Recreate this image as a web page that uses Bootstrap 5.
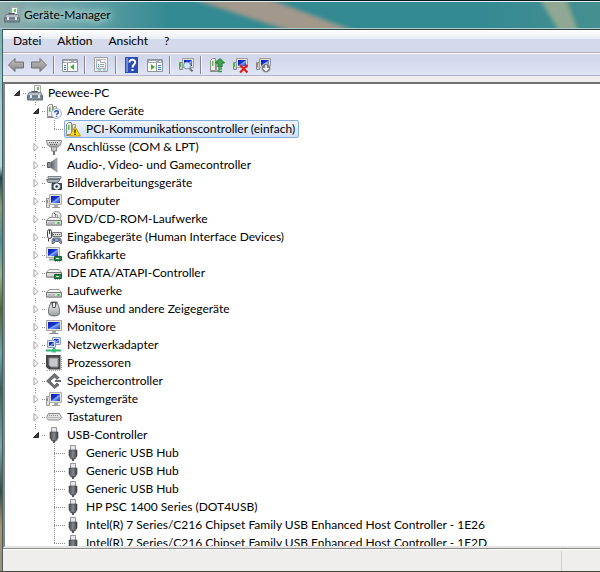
<!DOCTYPE html>
<html lang="de">
<head>
<meta charset="utf-8">
<meta name="viewport" content="width=device-width, initial-scale=1">
<title>Geräte-Manager</title>
<link href="https://cdn.jsdelivr.net/npm/bootstrap@5.3.0/dist/css/bootstrap.min.css" rel="stylesheet">
<style>
body{font-family:Lato,"Open Sans",sans-serif;font-size:12px;line-height:18px;color:#000;background:#338a92}
button{font:inherit;color:inherit;background:none;border:0;padding:0}
svg{display:block;flex:none}
.win{border-top:1px solid #0a1a1e;border-bottom:1px solid #454b3c;background:linear-gradient(#6aa0a2 0,#a8d4d4 20%,#b9d9d9 29%,#24434d 31%,#8f9a72 36%,#4c8f96 42%,#9db08a 48%,#5b6333 54%,#6fa6a6 62%,#3e5e5c 68%,#7aa6a4 78%,#3c4a48 86%,#b08e74 92%,#a58b78 100%) left/2px 100% no-repeat,#f0eded}
.titlebar{height:28px;border-top:1px solid #dfeeee;border-bottom:1px solid #a9cdcd;background:#338a92;position:relative;overflow:hidden}
.titlebar .aero{position:absolute;left:0;top:0}
.titlebar h1{font-size:12px;line-height:18px;font-weight:400;position:relative;text-shadow:0 0 6px #c8e6e6,0 0 9px #b8dada,0 0 12px #b8dada}
.titlebar .appicon{position:relative}
.client{border-left:1px solid #40605f;border-top:1px solid #3a4444;margin-left:2px;min-height:0}
.menubar{height:23px;padding-left:10px;background:linear-gradient(#fff 0,#eaeef6 9px,#d4d9ec 9px,#d4d9ec 100%);border-bottom:1px solid #b0aeb0;box-shadow:0 1px #fff}
.tools{height:22px;margin-top:1px;padding-left:1px;background:linear-gradient(#d3d8ec 30%,#e0e5f6);border-bottom:1px solid #b4b4cf}
.tool{margin:0 3px 0 4px}
.rule{width:1px;height:18px;margin:0 4px 0 3px;background:#85858b;box-shadow:1px 0 #f4f6fc}
.tree-pane{border:solid #77777b;border-width:2px 0 2px 2px;border-top-color:#717175;border-bottom-color:#e4e4e4;border-left-color:#85858a;margin-top:6px;background:#fff;overflow:hidden;min-height:0}
.tree,.tree ul{list-style:none;margin:0;padding:0}
.tree{padding-left:4px}
.tree ul{margin-left:19px}
.tree ul>li{background:repeating-linear-gradient(#8a8a8a 0 1px,transparent 1px 2px) 7px 0/1px 100% no-repeat}
.tree ul>li:last-child{background-size:1px 9px}
.node{display:flex;align-items:center;height:18px;white-space:nowrap}
.tog{width:14px;height:12px;flex:none;display:flex;align-items:center;justify-content:center;background:#fff}
.tog svg{margin-left:2px}
.dots{width:4px;height:1px;flex:none;background:repeating-linear-gradient(90deg,#8a8a8a 0 1px,transparent 1px 2px)}
.dots.leaf{width:11px;margin-left:7px}
.lbl{padding-left:5px}
.sel{height:18px;margin-left:-1px;padding-right:3px;border:1px solid #84acdd;border-radius:2px;background:linear-gradient(#f0f6fe,#cfe1fa)}
.status{height:23px;border-top:1px solid #8c8c89;background:#f0eded;box-shadow:inset 0 1px #fff}
.status .cell{width:39px;border-left:1px solid #cfcdcd;margin-top:2px}
</style>
<script src="https://cdn.jsdelivr.net/npm/bootstrap@5.3.0/dist/js/bootstrap.bundle.min.js"></script>
</head>
<body>
<svg width="0" height="0" class="position-absolute" aria-hidden="true">
<defs>
<linearGradient id="scr" x1="0" y1="0" x2="1" y2="1"><stop offset="0" stop-color="#0a1fa0"/><stop offset=".45" stop-color="#1634d8"/><stop offset=".55" stop-color="#7ea4ff"/><stop offset="1" stop-color="#1530c0"/></linearGradient>
<linearGradient id="metal" x1="0" y1="0" x2="0" y2="1"><stop offset="0" stop-color="#fafafa"/><stop offset="1" stop-color="#9a9da1"/></linearGradient>
<linearGradient id="spk" x1="0" y1="0" x2="1" y2="0"><stop offset="0" stop-color="#50555b"/><stop offset="1" stop-color="#b4b9be"/></linearGradient>
<linearGradient id="dark" x1="0" y1="0" x2="1" y2="0"><stop offset="0" stop-color="#47494d"/><stop offset=".5" stop-color="#85888d"/><stop offset="1" stop-color="#3c3e42"/></linearGradient>
<linearGradient id="arr" x1="0" y1="0" x2="0" y2="1"><stop offset="0" stop-color="#c4c4c4"/><stop offset="1" stop-color="#858585"/></linearGradient>
</defs>
<symbol id="i-pc" viewBox="0 0 16 16"><path d="M7.500 .5h6v8h-6z" fill="#f2f2f2" stroke="#aaa"/><path d="M10 2h2v3h-2z" fill="#6cc060"/><path d="M4.500 8V6.500h6V8" fill="none" stroke="#555"/><path d="M2 7.500h12l1.500 3.500H.5z" fill="#b4bec4" stroke="#74818a"/><path d="M.5 11h15v4H.5z" fill="#7d8d96" stroke="#5b6a73"/><path d="M3 10h2v3H3zM11 10h2v3h-2z" fill="#e4e8ea"/></symbol>
<symbol id="i-tower" viewBox="0 0 16 16"><path d="M1.500 3.500l2-2h3v12h-5z" fill="#ececec" stroke="#909090"/><path d="M3 4h1.500v5H3z" fill="#58c04a"/><path d="M7.500 3.500h3v10h-3z" fill="#e4e4e4" stroke="#999"/><path d="M1 14.500h9" stroke="#888"/></symbol>
<symbol id="i-q" viewBox="0 0 16 16"><use href="#i-tower" width="16" height="16"/><circle cx="10.500" cy="10.500" r="4.900" fill="#f3f6fd" stroke="#a2acc4"/><path d="M8.800 9.400c0-2.300 3.600-2.200 3.500 0 0 1.200-1.700 1.200-1.700 2.400M10.600 12.800v1" fill="none" stroke="#2445b0" stroke-width="1.400"/></symbol>
<symbol id="i-warn" viewBox="0 0 16 16"><use href="#i-tower" width="16" height="16"/><path d="M10 5.500l5.500 9.500h-11z" fill="#ffd91e" stroke="#c49a00" stroke-linejoin="round"/><path d="M10 8.500v3.300M10 12.600v1.400" stroke="#4a3a00" stroke-width="1.500"/></symbol>
<symbol id="i-port" viewBox="0 0 16 16"><path d="M.5 1.500h15l-1 4.500-3 2H4.500l-3-2z" fill="url(#metal)" stroke="#888"/><path d="M3 3.500h10M4 5.500h8" stroke="#555" stroke-dasharray="1 1"/><path d="M5.500 8h5v4h-5z" fill="#ccc" stroke="#888"/><path d="M8 12v4" stroke="#777" stroke-width="2"/></symbol>
<symbol id="i-audio" viewBox="0 0 16 16"><path d="M1.500 5.500h3v5h-3z" fill="#8b9096" stroke="#55595f"/><path d="M4.500 5.500L11 1v14L4.500 10.500z" fill="url(#spk)" stroke="#888d92" stroke-width=".7"/></symbol>
<symbol id="i-cam" viewBox="0 0 16 16"><path d="M2 1.500h13v2H2z" fill="#c7ccd1" stroke="#7c858c"/><path d="M.5 4.500H14l-2 3H2z" fill="#a9b1b8" stroke="#68727a"/><path d="M6 8.500h9.500v6H6z" fill="#59636b" stroke="#333c43"/><circle cx="10.700" cy="11.500" r="2.700" fill="#dbe9f5" stroke="#fff"/><circle cx="10.700" cy="11.500" r="1.200" fill="#234"/></symbol>
<symbol id="i-mon" viewBox="0 0 16 16"><path d="M.5 1.500h15v10H.5z" fill="#e8e6de" stroke="#a5a59c"/><path d="M2 3h12v7H2z" fill="url(#scr)"/><path d="M6 12h4v2H6z" fill="#aaa"/><path d="M3.500 14.500h9" stroke="#888"/></symbol>
<symbol id="i-comp" viewBox="0 0 16 16"><path d="M.5 5.500h3v9h-3z" fill="#ddd" stroke="#999"/><path d="M1.500 7v3" stroke="#4aba3d"/><path d="M3.500 1.500h12v10h-12z" fill="#e8e6de" stroke="#b0b0a8"/><path d="M5 3h9v7H5z" fill="url(#scr)"/><path d="M8 12h4v2H8z" fill="#aaa"/><path d="M6 14.500h8" stroke="#999"/></symbol>
<symbol id="i-drive" viewBox="0 0 16 16"><path d="M3 6.500h10l2.500 3v4.500H.5V9.500z" fill="#f6f6f6" stroke="#999"/><path d="M.5 9.500h15V14H.5z" fill="#d8dadc" stroke="#777"/><path d="M2 12h7" stroke="#999"/><path d="M11.500 11h2v2h-2z" fill="#2fbb2f"/></symbol>
<symbol id="i-dvd" viewBox="0 0 16 16"><circle cx="10.500" cy="5" r="4.500" fill="#ececec" stroke="#8e8e8e"/><circle cx="10.500" cy="5" r="1.300" fill="#fff" stroke="#888"/><path d="M8 2l2 2" stroke="#555"/><use href="#i-drive" width="16" height="16"/></symbol>
<symbol id="i-hid" viewBox="0 0 16 16"><rect x="1.500" y=".5" width="4" height="9" rx="2" fill="#eee" stroke="#444"/><path d="M3.500 1v4M2.500 9.500v3" stroke="#444"/><path d="M6.500 3.500h9v4h-9z" fill="#ddd" stroke="#777"/><path d="M7 5.500h8" stroke="#555" stroke-dasharray="1 1"/><path d="M6 14.500c0-5 1-6 2.500-5.500h4c2-.5 3 1 3 5.500-1.500.5-2-1.500-3-2h-3c-1 .5-1.500 3-3.500 2z" fill="#98a0aa" stroke="#59616b"/><path d="M8 10v2M7 11h2" stroke="#34b"/><circle cx="13" cy="11" r="1" fill="#36c"/></symbol>
<symbol id="i-gpu" viewBox="0 0 16 16"><path d="M.5 .5h13v10H.5z" fill="#e8e6de" stroke="#b0b0a8"/><path d="M2 2h10v7H2z" fill="url(#scr)"/><path d="M3 12.500h5" stroke="#999" stroke-width="2"/><path d="M8.500 9.500h7v4h-7z" fill="#2a8a4a" stroke="#145c2b"/><path d="M10 11h3v1h-3z" fill="#d9ead8"/><path d="M9 14.500h6" stroke="#c9a930" stroke-dasharray="1 1"/></symbol>
<symbol id="i-ide" viewBox="0 0 16 16"><path d="M3 4.500h10l2.500 3V12H.5V7.500z" fill="#f4f4f4" stroke="#999"/><path d="M.5 7.500h15V12H.5z" fill="#d8dadc" stroke="#777"/><path d="M8.500 9.500h7v4h-7z" fill="#2a8a4a" stroke="#145c2b"/><path d="M10 11h3v1h-3z" fill="#d9ead8"/><path d="M9 14.500h6" stroke="#c9a930" stroke-dasharray="1 1"/></symbol>
<symbol id="i-mouse" viewBox="0 0 16 16"><path d="M5 1c-1.500 4-3.500 8-2 12.500 3 2 7 2 10 0C14.500 9 12.500 5 11 1z" fill="url(#metal)" stroke="#6a6a6a"/><path d="M5 1l1.500 6h3L11 1z" fill="#505257"/><path d="M8 2v4" stroke="#eee" stroke-width="2"/></symbol>
<symbol id="i-net" viewBox="0 0 16 16"><path d="M6.500 .5h8v7h-8z" fill="#dfe6f5" stroke="#8b9bbe"/><path d="M8 2h5v4H8z" fill="url(#scr)"/><path d="M1.500 3.500h8v7h-8z" fill="#dfe6f5" stroke="#8b9bbe"/><path d="M3 5h5v4H3z" fill="url(#scr)"/><path d="M0 13.500h15M8 11v3" stroke="#2fb070" stroke-width="2"/><path d="M6 12h4v3.500H6z" fill="#35c07c"/></symbol>
<symbol id="i-cpu" viewBox="0 0 16 16"><path d="M1 15.500h14M15.500 2v13" stroke="#c79b3b" stroke-dasharray="1 1"/><path d="M0 0h14.500v14.500H3L0 12z" fill="#47474a"/><path d="M3 3h9v9H5L3 10z" fill="#c6c8cb" stroke="#8a8c90"/></symbol>
<symbol id="i-stor" viewBox="0 0 16 16"><path d="M8.500 .5l4.500 4-2 2-2.500-2.500L4 8l4.500 4.500L11 10l2 2-4.500 3.500L.5 8z" fill="#707276" stroke="#46484c" stroke-width=".7"/><path d="M9 7h6v2H9z" fill="#66686c"/></symbol>
<symbol id="i-kbd" viewBox="0 0 16 16"><path d="M2.500 4.500h11l2 4-2 2.500h-11L.5 8.500z" fill="#e4e4e6" stroke="#888"/><path d="M3 6.500h10M2.500 8.500h11" stroke="#888" stroke-dasharray="1 1"/></symbol>
<symbol id="i-usb" viewBox="0 0 16 16"><path d="M5.500 .5h5v5h-5z" fill="#e6e6ea" stroke="#95959b"/><path d="M4 5h8v6l-2 3H6l-2-3z" fill="url(#dark)" stroke="#3e4044" stroke-width=".6"/><path d="M8 13v3" stroke="#55575b" stroke-width="2"/></symbol>
<symbol id="t-open" viewBox="0 0 8 8"><path d="M6.500 1.500v5H1.500z" fill="#404040" stroke="#262626"/></symbol>
<symbol id="t-closed" viewBox="0 0 8 8"><path d="M2 .5L6 4.500 2 8z" fill="#fff" stroke="#a0a0a0"/></symbol>
</svg>

<div class="win d-flex flex-column vh-100">
<header class="titlebar d-flex align-items-center ps-1 flex-shrink-0">
<svg class="aero w-100 h-100" viewBox="0 0 600 26" preserveAspectRatio="none" aria-hidden="true">
<defs><filter id="soft" x="-20%" y="-50%" width="140%" height="200%"><feGaussianBlur stdDeviation="2"/></filter><linearGradient id="lft"><stop offset="0" stop-color="#8eabaa"/><stop offset=".5" stop-color="#62a0a4"/><stop offset="1" stop-color="#338a92"/></linearGradient><linearGradient id="rgt"><stop offset="0" stop-color="#338a92"/><stop offset="1" stop-color="#468f90"/></linearGradient></defs>
<rect width="170" height="26" fill="url(#lft)"/><rect x="480" width="120" height="26" fill="url(#rgt)"/>
<g filter="url(#soft)"><path d="M165-12h80l134 50h-62z" fill="#a3988c"/><path d="M538-6h27l15 40h-18z" fill="#90a893"/></g></svg>
<svg class="appicon" width="16" height="16" aria-hidden="true"><use href="#i-pc"/></svg>
<h1 class="mb-0 ps-1">Geräte-Manager</h1>
</header>
<div class="client d-flex flex-column flex-grow-1">
<nav class="menubar d-flex align-items-center flex-shrink-0 gap-3" aria-label="Menü">
<button type="button">Datei</button><button type="button">Aktion</button><button type="button">Ansicht</button><button type="button">?</button>
</nav>
<div class="tools d-flex align-items-center flex-shrink-0" id="tools" role="toolbar" aria-label="Symbolleiste"></div>
<main class="tree-pane flex-grow-1"><ul class="tree" id="tree"></ul></main>
<footer class="status d-flex justify-content-end flex-shrink-0"><div class="cell"></div></footer>
</div>
</div>
<script>
const svg=b=>`<svg width="16" height="16" viewBox="0 0 16 16" aria-hidden="true">${b}</svg>`;
const hub=['usb','Generic USB Hub'];
const data=['pc','Peewee-PC',[
['q','Andere Geräte',[['warn','PCI-Kommunikationscontroller (einfach)']]],
['port','Anschlüsse (COM & LPT)',0],['audio','Audio-, Video- und Gamecontroller',0],['cam','Bildverarbeitungsgeräte',0],['comp','Computer',0],['dvd','DVD/CD-ROM-Laufwerke',0],['hid','Eingabegeräte (Human Interface Devices)',0],['gpu','Grafikkarte',0],['ide','IDE ATA/ATAPI-Controller',0],['drive','Laufwerke',0],['mouse','Mäuse und andere Zeigegeräte',0],['mon','Monitore',0],['net','Netzwerkadapter',0],['cpu','Prozessoren',0],['stor','Speichercontroller',0],['comp','Systemgeräte',0],['kbd','Tastaturen',0],
['usb','USB-Controller',[hub,hub,hub,['usb','HP PSC 1400 Series (DOT4USB)'],['usb','Intel(R) 7 Series/C216 Chipset Family USB Enhanced Host Controller - 1E26'],['usb','Intel(R) 7 Series/C216 Chipset Family USB Enhanced Host Controller - 1E2D']]]]];
const esc=t=>t.replace('&','&amp;');
const node=([ic,t,c])=>{
 const tog=c===undefined?'<span class="dots leaf"></span>':`<button class="tog" type="button" aria-label="${esc(t)} ${c?'schließen':'öffnen'}"><svg width="8" height="8"><use href="#t-${c?'open':'closed'}"/></svg></button><span class="dots"></span>`;
 return `<li><div class="node">${tog}<div class="d-flex align-items-center${ic==='warn'?' sel':''}"><svg width="16" height="16" aria-hidden="true"><use href="#i-${ic}"/></svg><span class="lbl">${esc(t)}</span></div></div>${c?'<ul>'+c.map(node).join('')+'</ul>':''}</li>`};
document.getElementById('tree').innerHTML=node(data);
const pc='<path d="M1.500 5.500h3v7h-3z" fill="#ccc" stroke="#888"/><path d="M2.500 6v4" stroke="#3fbb35"/><path d="M4.500 1.500h11v9h-11z" fill="#e5e3dc" stroke="#9d9d9d"/><path d="M6 3h8v6H6z" fill="url(#scr)"/>';
const panel=a=>`<path d="M.5 2.500h15v12H.5z" fill="#fff" stroke="#8b929c"/><path d="M1 3h14v3H1z" fill="#a5abb4"/><path d="M2 4.500h9M12 4.500h2" stroke="#fff" stroke-dasharray="7 2"/>${a}`;
const T=[
['Zurück',svg('<path d="M.5 8L7 1.500V5h8.500v6H7v3.500z" fill="url(#arr)" stroke="#707070"/>')],
['Vorwärts',svg('<path d="M15.500 8L9 1.500V5H.5v6H9v3.500z" fill="url(#arr)" stroke="#707070"/>')],0,
['Konsolenstruktur',svg(panel('<path d="M5.500 6v8" stroke="#8b929c"/><path d="M2 8.500h2M2 10.500h2M2 12.500h2" stroke="#3872b5"/><path d="M12 7v6L8 10z" fill="#38b52d"/>'))],0,
['Eigenschaften',svg('<path d="M1.500 .5h13v14h-13z" fill="#f8f8f8" stroke="#9ea0a4"/><path d="M3 2.500h10" stroke="#bbb"/><path d="M3.500 5.500v-2h4v2h5v6h-9z" fill="#fff" stroke="#a5a8ad"/><path d="M5 7.500h1M5 9.500h1" stroke="#38a0d8" stroke-width="1.500"/><path d="M7 7.500h4M7 9.500h4" stroke="#999"/><path d="M5 13h3M10 13h3" stroke="#49aac0"/>')],0,
['Hilfe',svg('<path d="M1 0h13v16H1z" fill="#2c4cb4"/><path d="M2 1h2v14H2z" fill="#6f8ce0"/><path d="M5.500 5.500C5.500 1.500 11.500 2 11.200 5.500c-.2 2-2.700 2.200-2.700 5M8.500 12v2" fill="none" stroke="#fff" stroke-width="2"/>')],
['Aktionsbereich',svg(panel('<path d="M9.500 6v8" stroke="#8b929c"/><path d="M11 8.500h3M11 10.500h3M11 12.500h3" stroke="#3872b5"/><path d="M4 7v6l4-3z" fill="#38b52d"/>'))],0,
['Nach geänderter Hardware suchen',svg(pc+'<path d="M11.500 11l3 3.500" stroke="#777" stroke-width="2"/><circle cx="9" cy="8.500" r="3.500" fill="#cfe6fa" stroke="#8394ad"/>')],0,
['Treiber aktualisieren',svg('<use href="#i-tower" width="16" height="16"/><path d="M11 1.500l4.500 4.500H13v4H9V6H6.500z" fill="#3da648" stroke="#16742a"/><path d="M9 12h4M9 14.500h4" stroke="#2d9640" stroke-width="1.500"/>')],
['Deinstallieren',svg(pc+'<path d="M8 8l7.500 7.500M15.500 8L8 15.500" stroke="#e31b1b" stroke-width="2.200"/>')],
['Deaktivieren',svg(pc+'<circle cx="11" cy="11" r="4.600" fill="#777b80" stroke="#c5c7ca"/><path d="M11 8v5M8.500 11l2.500 2.500 2.500-2.500" fill="none" stroke="#fff" stroke-width="1.500"/>')]];
document.getElementById('tools').innerHTML=T.map(t=>t?`<button class="tool" type="button" aria-label="${t[0]}">${t[1]}</button>`:'<span class="rule"></span>').join('');
</script>
</body>
</html>
